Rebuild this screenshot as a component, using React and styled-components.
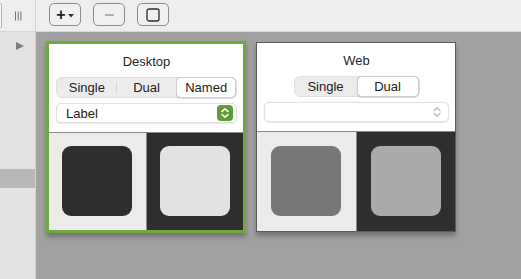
import React from "react";
import styled, { createGlobalStyle } from "styled-components";

const Global = createGlobalStyle`
  html, body { margin: 0; padding: 0; overflow: hidden; }
  body { font-family: "Liberation Sans", Arial, sans-serif; font-size: 13px; color: #222; }
`;

const Page = styled.div`
  width: 521px;
  height: 279px;
  display: flex;
  flex-direction: column;
  background: #a1a1a1;
`;

const TopBar = styled.div`
  height: 31px;
  flex: none;
  display: flex;
  align-items: stretch;
  background: #eeeeee;
  border-bottom: 1px solid #d6d6d6;
`;

const TopLeft = styled.div`
  width: 35px;
  border-right: 1px solid #d4d4d4;
  display: flex;
  align-items: center;
`;

const ClippedButton = styled.div`
  width: 1px;
  height: 23px;
  background: #fafafa;
  border: 1px solid #b5b5b5;
  border-left: none;
  border-radius: 0 4px 4px 0;
  align-self: flex-start;
  margin-top: 3px;
`;

const Grip = styled.svg`
  margin-left: 11px;
`;

const Tools = styled.div`
  display: flex;
  gap: 12px;
  padding: 3px 0 0 13px;
`;

const ToolButton = styled.div`
  width: 30px;
  height: 21px;
  border: 1px solid #8c8c8c;
  border-radius: 5px;
  background: #f0f0f0;
  display: flex;
  align-items: center;
  justify-content: center;
  color: ${(p) => (p.disabled ? "#a8a8a8" : "#222")};
  font-size: 16px;
  font-weight: bold;
  box-sizing: content-box;
`;

const Main = styled.div`
  flex: 1;
  display: flex;
  min-height: 0;
`;

const Sidebar = styled.div`
  width: 35px;
  background: #e3e3e3;
  border-right: 1px solid #d2d2d2;
  display: flex;
  flex-direction: column;
`;

const TreeRow = styled.div`
  height: 19px;
  display: flex;
  align-items: center;
  padding-left: 16px;
  margin-top: 4px;
`;

const Triangle = styled.div`
  width: 0;
  height: 0;
  border-top: 4.5px solid transparent;
  border-bottom: 4.5px solid transparent;
  border-left: 8px solid #7d7d7d;
`;

const SelectedRow = styled.div`
  height: 19px;
  margin-top: 114px;
  background: #b7b7b7;
`;

const Canvas = styled.div`
  flex: 1;
  display: flex;
  align-items: flex-start;
  gap: 10px;
  padding: 9px 0 0 10px;
`;

const Card = styled.div`
  width: 200px;
  box-sizing: border-box;
  background: #fff;
  border: ${(p) => (p.$active ? "3px solid #6ea93d" : "1px solid #5c5c5c")};
  margin-top: ${(p) => (p.$active ? "0" : "1px")};
  box-shadow: 0 4px 5px rgba(0, 0, 0, 0.28);
  display: flex;
  flex-direction: column;
`;

const Header = styled.div`
  height: 88px;
  box-sizing: border-box;
  padding: 10px 6px 0 7px;
  display: flex;
  flex-direction: column;
  align-items: center;
`;

const Title = styled.div`
  line-height: 16px;
  height: 16px;
  color: #262626;
`;

const Segmented = styled.div`
  margin-top: 7px;
  display: inline-flex;
  height: 21px;
  box-sizing: border-box;
  background: #ececec;
  border: 1px solid #e0e0e0;
  border-radius: 6px;
  width: ${(p) => (p.$full ? "100%" : "auto")};
`;

const Segment = styled.div`
  flex: 1;
  width: 60px;
  display: flex;
  align-items: center;
  justify-content: center;
  position: relative;
  color: #222;
  margin: -1px 0;
  border-radius: 5px;
  background: ${(p) => (p.$on ? "#fff" : "transparent")};
  border: 1px solid ${(p) => (p.$on ? "#cfcfcf" : "transparent")};
  box-shadow: ${(p) => (p.$on ? "0 0.5px 1px rgba(0,0,0,0.15)" : "none")};
  &::after {
    content: "";
    display: ${(p) => (p.$sep ? "block" : "none")};
    position: absolute;
    right: -1px;
    top: 4px;
    bottom: 4px;
    width: 1px;
    background: #d3d3d3;
  }
`;

const Popup = styled.div`
  margin-top: 5px;
  align-self: stretch;
  height: 20px;
  box-sizing: border-box;
  border: 1px solid #e2e2e2;
  border-radius: 5px;
  box-shadow: 0 0.5px 1px rgba(0, 0, 0, 0.1);
  display: flex;
  align-items: center;
  padding: 0 3px 0 9px;
  color: #222;
`;

const PopupLabel = styled.span`
  flex: 1;
`;

const Stepper = styled.div`
  width: 16px;
  height: 16px;
  border-radius: 4px;
  background: ${(p) => (p.$green ? "#5c9e35" : "transparent")};
  display: flex;
  align-items: center;
  justify-content: center;
`;

const Swatches = styled.div`
  display: flex;
  border-top: 1px solid #8a8a8a;
`;

const Half = styled.div`
  flex: 1;
  aspect-ratio: 1;
  display: flex;
  align-items: center;
  justify-content: center;
  background: ${(p) => (p.$dark ? "#2e2e2e" : "#ebebeb")};
  border-left: ${(p) => (p.$dark ? "1px solid #8a8a8a" : "none")};
`;

const Square = styled.div`
  width: 70px;
  height: 70px;
  border-radius: 9px;
  background: ${(p) => p.$color};
`;

const Chevrons = ({ color }) => (
  <svg width="10" height="12" viewBox="0 0 10 12">
    <path d="M2 4.5 L5 1.8 L8 4.5 M2 7.5 L5 10.2 L8 7.5" fill="none" stroke={color} strokeWidth="1.6" strokeLinecap="round" strokeLinejoin="round" />
  </svg>
);

export default function App() {
  return (
    <>
      <Global />
      <Page>
        <TopBar>
          <TopLeft>
            <ClippedButton />
            <Grip width="10" height="10" viewBox="0 0 10 10">
              <path d="M2.5 0.5 V9.5 M5.2 0.5 V9.5 M7.9 0.5 V9.5" stroke="#707070" strokeWidth="1" />
            </Grip>
          </TopLeft>
          <Tools>
            <ToolButton>
              <span>+</span>
              <svg width="6" height="4" viewBox="0 0 6 4" style={{ marginLeft: 2, marginTop: 2 }}>
                <path d="M0 0 H6 L3 3.5 Z" fill="#333" />
              </svg>
            </ToolButton>
            <ToolButton disabled>
              <svg width="9" height="2" viewBox="0 0 9 2">
                <rect x="0" y="0" width="9" height="2" fill="#b0b0b0" />
              </svg>
            </ToolButton>
            <ToolButton>
              <svg width="14" height="14" viewBox="0 0 14 14">
                <rect x="1" y="1" width="12" height="12" rx="2" fill="none" stroke="#2a2a2a" strokeWidth="1.3" />
              </svg>
            </ToolButton>
          </Tools>
        </TopBar>
        <Main>
          <Sidebar>
            <TreeRow>
              <Triangle />
            </TreeRow>
            <SelectedRow />
          </Sidebar>
          <Canvas>
            <Card $active>
              <Header>
                <Title>Desktop</Title>
                <Segmented $full>
                  <Segment $sep>Single</Segment>
                  <Segment>Dual</Segment>
                  <Segment $on>Named</Segment>
                </Segmented>
                <Popup>
                  <PopupLabel>Label</PopupLabel>
                  <Stepper $green>
                    <Chevrons color="#fff" />
                  </Stepper>
                </Popup>
              </Header>
              <Swatches>
                <Half>
                  <Square $color="#2e2e2e" />
                </Half>
                <Half $dark>
                  <Square $color="#e2e2e2" />
                </Half>
              </Swatches>
            </Card>
            <Card>
              <Header>
                <Title>Web</Title>
                <Segmented>
                  <Segment>Single</Segment>
                  <Segment $on>Dual</Segment>
                </Segmented>
                <Popup>
                  <PopupLabel />
                  <Stepper>
                    <Chevrons color="#c2c2c2" />
                  </Stepper>
                </Popup>
              </Header>
              <Swatches>
                <Half>
                  <Square $color="#777777" />
                </Half>
                <Half $dark>
                  <Square $color="#aaaaaa" />
                </Half>
              </Swatches>
            </Card>
          </Canvas>
        </Main>
      </Page>
    </>
  );
}
